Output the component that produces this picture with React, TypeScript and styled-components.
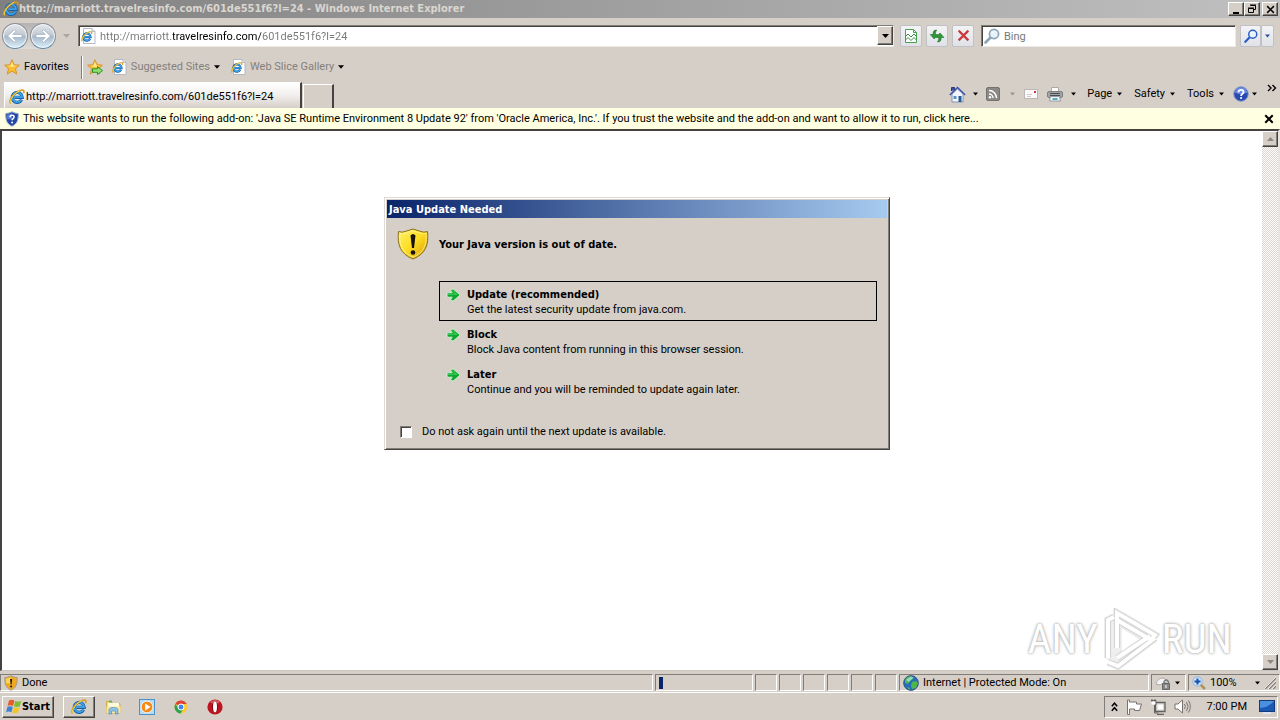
import React from "react";
import styled, { createGlobalStyle } from "styled-components";

const face = "#d6cfc8";
const shadow = "#807c77";
const dark = "#45423f";
const ui = `Roboto, "Liberation Sans", sans-serif`;
const uiBold = `"DejaVu Sans Condensed", "DejaVu Sans", sans-serif`;

const GlobalStyle = createGlobalStyle`
  * { box-sizing: border-box; }
  body { margin: 0; background: ${face}; color: #000; font-family: ${ui}; font-size: 11px; line-height: 14px; }
  button, input { font: inherit; color: inherit; margin: 0; padding: 0; border: 0; background: none; border-radius: 0; }
  svg { display: block; flex: none; }
  h1, h2, p { margin: 0; font-size: 11px; }
  h1, h2, strong { font-family: ${uiBold}; }
`;

const Screen = styled.div`
  min-height: 100vh;
  display: flex;
  flex-direction: column;
  white-space: nowrap;
`;

/* ---------- title bar ---------- */
const TitleBar = styled.header`
  display: flex;
  align-items: center;
  height: 18px;
  padding: 0 2px 0 3px;
  color: #dad6d0;
  background: linear-gradient(90deg, #808080, #c0c0c0);
`;
const WindowTitle = styled.h1`
  flex: 1;
  font-weight: bold;
`;
const Caption = styled.button<{ $gap?: boolean }>`
  display: grid;
  place-items: center;
  width: 16px;
  height: 14px;
  margin-left: ${(p) => (p.$gap ? 2 : 0)}px;
  background: ${face};
  border: 1px solid;
  border-color: #fff ${dark} ${dark} #fff;
  box-shadow: inset -1px -1px ${shadow};
`;

/* ---------- navigation ---------- */
const NavBar = styled.nav`
  display: flex;
  align-items: center;
  height: 34px;
  padding: 1px 6px 0 2px;
`;
const RoundPair = styled.div`
  display: flex;
  gap: 2px;
  border-radius: 13px;
  background: linear-gradient(#b5b3b2, #dfdbd7);
`;
const RoundButton = styled.button`
  display: grid;
  place-items: center;
  width: 26px;
  height: 26px;
  border: 1px solid #8b9098;
  border-bottom-color: #5f87a8;
  border-radius: 50%;
  background: linear-gradient(#e4e7ec, #c3c9d2 45%, #a9b8c9 52%, #d9effc);
  box-shadow: inset 0 0 1px 1px #f4f8fc;
`;
const Plain = styled.button`
  display: grid;
  place-items: center;
  height: 18px;
`;
const PageMenu = styled(Plain)`
  width: 11px;
  margin: 0 6px 0 5px;
`;
const Field = styled.div<{ $w?: number }>`
  display: flex;
  align-items: center;
  flex: ${(p) => (p.$w ? `0 1 ${p.$w}px` : "1 1 0")};
  height: 22px;
  padding-left: 2px;
  background: #fff;
  border: 1px solid;
  border-color: ${shadow} #eeeae6 #eeeae6 ${shadow};
  box-shadow: inset 1px 1px ${dark};
`;
const AddressInput = styled.input`
  flex: 1;
  min-width: 0;
  margin-left: 4px;
  padding-top: 2px;
  outline: 0;
  color: transparent;
  background: linear-gradient(90deg, #777 73px, #000 73px 161px, #777 161px);
  background-clip: text;
  -webkit-background-clip: text;
`;
const SearchInput = styled.input`
  flex: 1;
  min-width: 0;
  margin-left: 4px;
  padding-top: 2px;
  outline: 0;
  &::placeholder { color: #777; opacity: 1; }
`;
const DropButton = styled(Caption)`
  height: 19px;
`;
const ToolButton = styled.button<{ $w?: number; $ml?: number }>`
  display: grid;
  place-items: center;
  width: ${(p) => p.$w ?? 22}px;
  height: 22px;
  margin-left: ${(p) => p.$ml ?? 4}px;
  border: 1px solid #bfc1c5;
  border-radius: 2px;
  background: linear-gradient(#f3f3f5, #e0e2e8);
`;
const SearchBox = styled.div`
  display: flex;
  flex: 0 1 293px;
  margin-left: 7px;
`;

/* ---------- favorites and tabs ---------- */
const FavoritesBar = styled.div`
  display: flex;
  align-items: center;
  height: 30px;
  padding-left: 4px;
`;
const BarButton = styled.button<{ $dim?: boolean; $mr?: number }>`
  display: flex;
  align-items: center;
  gap: 4px;
  margin-right: ${(p) => p.$mr ?? 0}px;
  color: ${(p) => (p.$dim ? "#85807b" : "#000")};
`;
const Divider = styled.span`
  width: 2px;
  height: 23px;
  margin: 0 4px 0 12px;
  border-left: 1px solid ${shadow};
  border-right: 1px solid #fff;
`;
const TabRow = styled.div`
  display: flex;
  align-items: flex-end;
  height: 26px;
  padding: 0 3px 0 4px;
`;
const Tab = styled.button<{ $active?: boolean }>`
  display: flex;
  align-items: center;
  gap: 1px;
  width: ${(p) => (p.$active ? 298 : 31)}px;
  height: ${(p) => (p.$active ? 26 : 24)}px;
  padding: 2px 0 0 4px;
  margin-right: 1px;
  border: solid;
  border-width: 1px 2px 0 1px;
  border-color: #fff ${dark} #fff #fff;
  background: ${(p) => (p.$active ? `linear-gradient(#fff, #f3f1ef 45%, ${face})` : face)};
`;
const Commands = styled.div`
  display: flex;
  align-items: center;
  height: 28px;
  margin-left: auto;
`;
const Command = styled.button<{ $ml: number; $gap?: number }>`
  display: flex;
  align-items: center;
  gap: ${(p) => p.$gap ?? 5}px;
  margin-left: ${(p) => p.$ml}px;
`;
const More = styled.button`
  align-self: flex-start;
  margin: 4px 0 0 10px;
`;

/* ---------- add-on notice ---------- */
const InfoBar = styled.div`
  display: flex;
  align-items: center;
  gap: 4px;
  height: 21px;
  padding: 0 6px 0 5px;
  background: #ffffe1;
`;
const InfoLink = styled.button`
  flex: 1;
  text-align: left;
`;

/* ---------- page ---------- */
const Viewport = styled.div`
  position: relative;
  flex: 1;
  display: flex;
  background: #fff;
  border: solid;
  border-width: 2px 2px 1px;
  border-color: ${dark} #e8e4df #c9c5c0 ${dark};
`;
const Page = styled.main`
  flex: 1;
  display: flex;
  justify-content: center;
  align-items: flex-start;
  padding: 66px 0 66px 10px;
`;
const ScrollTrack = styled.div`
  display: flex;
  flex-direction: column;
  justify-content: space-between;
  width: 16px;
  background: repeating-conic-gradient(#fff 0 25%, #d9d4ce 0 50%) 0 0 / 2px 2px;
`;
const ScrollButton = styled(Caption)`
  height: 16px;
`;

const Dialog = styled.section`
  width: 506px;
  padding: 2px;
  background: ${face};
  border: 1px solid;
  border-color: #dedad5 ${dark} ${dark} #dedad5;
  box-shadow: inset 1px 1px #fff, inset -1px -1px ${shadow};
`;
const DialogTitle = styled.h2`
  height: 18px;
  padding-left: 2px;
  color: #fff;
  line-height: 19px;
  background: linear-gradient(90deg, #0a246a, #a6caf0);
`;
const Headline = styled.div`
  display: flex;
  align-items: center;
  gap: 10px;
  height: 52px;
  padding-left: 10px;
  strong { padding-top: 2px; }
`;
const Options = styled.div`
  display: flex;
  flex-direction: column;
  margin: 11px 10px 0 52px;
`;
const Option = styled.button<{ $focused?: boolean }>`
  display: flex;
  align-items: flex-start;
  gap: 6px;
  height: 40px;
  padding: 5px 6px 0;
  line-height: 15px;
  text-align: left;
  border: 1px solid ${(p) => (p.$focused ? "#000" : "transparent")};
  svg { margin-top: 1px; }
  strong, span { display: block; }
`;
const CheckLabel = styled.label`
  display: flex;
  align-items: center;
  gap: 10px;
  padding: 24px 0 8px 13px;
`;
const Check = styled.input`
  appearance: none;
  width: 12px;
  height: 12px;
  background: #fff;
  border: 1px solid;
  border-color: ${shadow} #fff #fff ${shadow};
  box-shadow: inset 1px 1px ${dark};
  &:checked { background: radial-gradient(#000 40%, #fff 45%); }
`;

const Watermark = styled.div`
  position: absolute;
  right: 46px;
  bottom: 0;
  display: flex;
  align-items: center;
  gap: 2px;
  color: #fff;
  font: 41px/62px "Roboto Condensed", "Liberation Sans Narrow", sans-serif;
  text-shadow: 0 0 2px #b4b4b4, 0 0 3px #bbb, 0 0 4px #ddd;
  pointer-events: none;
`;

/* ---------- status bar ---------- */
const StatusBar = styled.footer`
  display: flex;
  gap: 2px;
  height: 22px;
  padding: 3px 0 1px;
  border-bottom: 1px solid #fff;
`;
const Cell = styled.div<{ $w?: number }>`
  display: flex;
  align-items: center;
  gap: 4px;
  flex: ${(p) => (p.$w ? `0 0 ${p.$w}px` : "1")};
  padding: 1px 3px 0;
  border: 1px solid;
  border-color: ${shadow} #fff #fff ${shadow};
`;
const Progress = styled.span`
  width: 4px;
  height: 12px;
  background: #0a246a;
`;
const Push = styled.span`
  margin-left: auto;
`;

/* ---------- taskbar ---------- */
const TaskBar = styled.footer`
  display: flex;
  align-items: center;
  height: 27px;
  padding: 0 2px;
`;
const TaskButton = styled.button<{ $w: number; $raised?: boolean; $ml?: number }>`
  display: flex;
  align-items: center;
  justify-content: center;
  width: ${(p) => p.$w}px;
  height: 22px;
  margin-left: ${(p) => p.$ml ?? 0}px;
  border: 1px solid;
  border-color: ${(p) => (p.$raised ? `#fff ${dark} ${dark} #fff` : "transparent")};
  box-shadow: ${(p) => (p.$raised ? `inset -1px -1px ${shadow}` : "none")};
`;
const Tray = styled.div`
  display: flex;
  align-items: center;
  gap: 8px;
  height: 22px;
  margin-left: auto;
  padding: 0 2px 0 6px;
  border: 1px solid;
  border-color: ${shadow} #fff #fff ${shadow};
`;
const Clock = styled.time`
  margin: 0 4px 0 8px;
`;

/* ---------- drawings ---------- */
const Tri = ({ c = "#000", w = 7 }: { c?: string; w?: number }) => (
  <svg width={w} height="4" viewBox="0 0 7 4"><path d="M0 0h7L3.5 4z" fill={c} /></svg>
);
const IeMark = () => (
  <g fill="none">
    <path d="M12.6 10.8A5 5 0 1 1 13.2 8.4H5.4" stroke="#155fa8" strokeWidth="3.2" />
    <path d="M12.4 10.6A4.8 4.8 0 1 1 13 8.2H5.4" stroke="#3fa4e6" strokeWidth="1.7" />
    <path d="M1.6 14.4C-.8 11.2 4.800 3.600 11 1.400c3.200-1.100 4.600.2 3.600 2.800" stroke="#d79b13" strokeWidth="1.6" />
    <path d="M1.400 13.800C.4 11.400 5.200 3.900 11 1.600" stroke="#f8dc58" strokeWidth=".9" />
  </g>
);
const Ie = ({ s = 16 }: { s?: number }) => (
  <svg width={s} height={s} viewBox="0 0 16 16"><IeMark /></svg>
);
const PageIe = () => (
  <svg width="15" height="16" viewBox="0 0 15 16">
    <path d="M2.500.5h8.500l3 3v12h-11.500z" fill="#fff" stroke="#b4b9c2" />
    <path d="M11 .5v3h3" fill="#dfe6ef" stroke="#b4b9c2" />
    <g transform="translate(0 3) scale(.72)"><IeMark /></g>
  </svg>
);
const Arrow = ({ flip }: { flip?: boolean }) => (
  <svg width="18" height="16" viewBox="0 0 18 16">
    <path d={flip ? "M9.500 1.500L16.500 8l-7 6.500-1.500-1.700L11.200 9.600H2V6.400h9.200L8 3.200z" : "M8.500 1.500L1.500 8l7 6.500L10 12.800 6.800 9.600H16V6.400H6.800L10 3.200z"} fill="#fff" stroke="#9fb0c4" strokeWidth=".8" />
  </svg>
);
const star = "M8 .8l2.200 4.900 5.200.5-3.900 3.500 1.200 5.300L8 12.200 3.300 15l1.200-5.300L.6 6.200l5.200-.5z";
const Star = ({ add }: { add?: boolean }) => (
  <svg width="16" height="16" viewBox="0 0 16 16">
    <path d={star} fill="#fcbd33" stroke="#d3902a" strokeWidth=".9" />
    <path d="M8 3l1.400 3.500 3 .4L8 8 3.500 7l3-.5z" fill="#ffe98f" />
    {add && <path d="M5.500 9.800h5V7.600l5 4-5 4v-2.300h-5z" fill="#8ee070" stroke="#1c8c1c" strokeWidth=".9" />}
  </svg>
);
const Lens = ({ c, s = 16 }: { c: string; s?: number }) => (
  <svg width={s} height={s} viewBox="0 0 16 16">
    <path d="M6.500 9.500L1.500 14.500" stroke={c} strokeWidth="2.600" strokeLinecap="round" />
    <circle cx="10" cy="6" r="4.600" fill="#e6f3fb" stroke={c} strokeWidth="1.700" />
    <path d="M7.800 5.500a2.400 2.400 0 0 1 2.400-2" fill="none" stroke="#fff" />
  </svg>
);
const Compat = () => (
  <svg width="14" height="16" viewBox="0 0 14 16">
    <path d="M1.500 14.500v-13h8l3 3v10z" fill="#fff" stroke="#4aa052" />
    <path d="M9.500 1.500v3h3" fill="none" stroke="#4aa052" />
    <path d="M1.500 8.500L4 6l3 3 3-3 2.500 2.500M1.500 12L4 9.500l3 3 3-3 2.500 2.500" fill="none" stroke="#389044" />
  </svg>
);
const Refresh = () => (
  <svg width="16" height="14" viewBox="0 0 16 14">
    <path d="M7.800 1C4.700 1 4 2.400 4 5.500H1.200L5.200 10l4-4.500H6.500C6.400 3.600 6.600 2.300 7.800 1z" fill="#2c9836" stroke="#15651d" strokeWidth=".5" />
    <path d="M8.400 13c3.100 0 3.800-1.400 3.800-4.500H15L11 4 7 8.500h2.700c.1 1.900-.1 3.200-1.300 4.500z" fill="#2c9836" stroke="#15651d" strokeWidth=".5" />
  </svg>
);
const Cross = ({ c, s = 12, w = 2.4 }: { c: string; s?: number; w?: number }) => (
  <svg width={s} height={s} viewBox="0 0 12 12"><path d="M1.500 1.500l9 9M10.500 1.500l-9 9" stroke={c} strokeWidth={w} /></svg>
);
const Home = () => (
  <svg width="17" height="17" viewBox="0 0 17 17">
    <path d="M3 8v8h11V8L8.500 3z" fill="#f2f5fb" stroke="#8493b5" />
    <path d="M2.500 5V1.500h3V4" fill="#3b50a0" stroke="#26377c" />
    <path d="M.8 9L8.500 1.500 16.200 9" fill="none" stroke="#3c51a4" strokeWidth="1.400" />
    <path d="M4.500 10h3v3h-3z" fill="#5a8fc9" /><path d="M9.500 10h3v6h-3z" fill="#235b94" />
  </svg>
);
const Rss = () => (
  <svg width="14" height="14" viewBox="0 0 14 14">
    <rect x=".5" y=".5" width="13" height="13" rx="1.500" fill="#8b8885" stroke="#75726f" />
    <g fill="none" stroke="#fff" strokeWidth="1.500"><path d="M3 7a4 4 0 0 1 4 4M3 3.500a7.500 7.500 0 0 1 7.500 7.500" /></g>
    <circle cx="4" cy="10.200" r="1.200" fill="#fff" />
  </svg>
);
const Mail = () => (
  <svg width="14" height="10" viewBox="0 0 14 10">
    <rect x=".5" y=".5" width="13" height="9" fill="#fbf9f8" stroke="#bbb7b8" />
    <path d="M10 2h2v2h-2z" fill="#c7364c" /><path d="M3 5.500h5M3 7.500h4" stroke="#ceccd2" />
  </svg>
);
const Printer = () => (
  <svg width="16" height="16" viewBox="0 0 16 16">
    <path d="M4.500 6V1.500h7V6" fill="#fff" stroke="#aaa" />
    <rect x=".5" y="5.500" width="15" height="6" rx="1.500" fill="#a2a4a7" stroke="#7b7d80" />
    <path d="M3 7.500h10M3 9.500h10" stroke="#4a4d50" strokeWidth="1.200" />
    <path d="M3.500 10.500h9l1 4.500h-11z" fill="#f5f8fa" stroke="#979ca0" /><path d="M5.500 12h5v2h-5z" fill="#5aaac4" />
  </svg>
);
const Help = () => (
  <svg width="16" height="16" viewBox="0 0 16 16">
    <circle cx="8" cy="8" r="7.300" fill="#2849b0" stroke="#8f9fc9" />
    <path d="M1.800 6.500a6.300 6.300 0 0 1 12.400 0Q8 10 1.800 6.500z" fill="#6b8ae0" />
    <path d="M5.500 6.300C5.500 3 10.600 3 10.500 6c0 1.900-2.400 1.800-2.400 4" fill="none" stroke="#fff" strokeWidth="1.800" /><circle cx="8.100" cy="12" r="1.100" fill="#fff" />
  </svg>
);
const HelpShield = () => (
  <svg width="14" height="16" viewBox="0 0 14 16">
    <path d="M.8 2.500Q4 2.500 7 .8q3 1.700 6.200 1.700C13.500 9 12 13 7 15.200 2 13 .5 9 .8 2.500z" fill="#2448a8" stroke="#9aa9ca" />
    <path d="M2 3.700q3-.3 5-1.500v6H2.200z" fill="#577ed6" />
    <path d="M5 6.200c0-2.600 4.200-2.500 4.100-.2 0 1.600-2 1.600-2 3.300" fill="none" stroke="#fff" strokeWidth="1.500" /><circle cx="7.100" cy="11.500" r="1" fill="#fff" />
  </svg>
);
const Shield = () => (
  <svg width="32" height="32" viewBox="0 0 32 32">
    <defs><linearGradient id="gold" x2="1" y2="1"><stop stopColor="#fff36b" /><stop offset=".5" stopColor="#fddc22" /><stop offset="1" stopColor="#d59a08" /></linearGradient></defs>
    <path d="M1.500 3.500Q5 5 9 3.200L16 1l7 2.200q4 1.800 7.500.3C32 17 28.500 26 16 31 3.500 26 0 17 1.500 3.500z" fill="url(#gold)" stroke="#8a6f1c" strokeWidth="1" />
    <path d="M3 5.500q3.500 1 7-.8L16 2.800l6 1.900q3.500 1.800 7 .8C30 17 26.500 24.800 16 29.200 5.500 24.800 2 17 3 5.500z" fill="none" stroke="#fff6a6" strokeWidth=".7" />
    <path d="M13.500 7.500q2.500-3 5 0L17 20h-2z" fill="#17130a" /><circle cx="16" cy="24.500" r="2.300" fill="#17130a" />
  </svg>
);
const StatusShield = () => (
  <svg width="14" height="16" viewBox="0 0 14 16">
    <path d="M.8 2.500Q4 2.500 7 .8q3 1.700 6.200 1.700C13.500 9 12 13 7 15.200 2 13 .5 9 .8 2.500z" fill="#f0a81e" stroke="#a39c94" />
    <path d="M2 3.700q3-.3 5-1.500v6H2.200z" fill="#fbd65c" />
    <path d="M6 4h2.200l-.6 5.500h-1z" fill="#2a1c0a" /><circle cx="7.100" cy="11.500" r="1.100" fill="#2a1c0a" />
  </svg>
);
const Go = () => (
  <svg width="15" height="14" viewBox="0 0 15 14">
    <path d="M1 4.800h5.200L4.500 2.500 7 .8 14.200 7 7 13.200l-2.500-1.700 1.700-2.300H1z" fill="#0fa62f" stroke="#d2f0d0" strokeWidth="1" />
    <path d="M2 5.800h6.500L6.200 2.900 7 2.300 12 7H2z" fill="#2fc94c" />
  </svg>
);
const Globe = () => (
  <svg width="16" height="16" viewBox="0 0 16 16">
    <circle cx="8" cy="8" r="7.400" fill="#286cbc" stroke="#1c3d76" strokeWidth=".7" />
    <path d="M2 5q2-4 7-4l1 3-3 2-2 3-3-1zM9 7l4-1 2 2-2 5-4 1-1-3zM4 12l3 1-1 2z" fill="#4db848" />
    <path d="M3 5q3-4 8-2.500Q8 4 6 7z" fill="#b9e5f5" opacity=".7" />
  </svg>
);
const Lock = () => (
  <svg width="16" height="14" viewBox="0 0 16 14">
    <path d="M1 8C2 4 5 2 8 2l5 3-4 2-4 2z" fill="#f3f3f3" stroke="#aaa" />
    <path d="M9 8V5.500q2.500-3 4.500 0V8" fill="none" stroke="#777" strokeWidth="1.300" /><path d="M7.500 7.500h7v6h-7z" fill="#898989" stroke="#666" /><path d="M11 9v3" stroke="#fff" />
  </svg>
);
const ZoomIn = () => (
  <svg width="14" height="14" viewBox="0 0 14 14">
    <path d="M8.500 8.500l4.500 4.500" stroke="#b19257" strokeWidth="2.500" /><circle cx="5.500" cy="5.500" r="4.700" fill="#cae4fa" stroke="#8fb3d6" />
    <path d="M5.500 2.500v6M2.500 5.500h6" stroke="#174fb0" strokeWidth="2" />
  </svg>
);
const Grip = () => (
  <svg width="12" height="12" viewBox="0 0 12 12"><path d="M1 12L12 1M5 12l7-7M9 12l3-3" stroke="#807c77" strokeWidth="1.500" /><path d="M0 12L12 0M4 12l8-8M8 12l4-4" stroke="#fff" strokeWidth=".7" /></svg>
);
const WinFlag = () => (
  <svg width="16" height="15" viewBox="0 0 16 15">
    <path d="M3 1.500Q6 0 8.400 1.600L7 7Q4.500 5.500 1.600 6.800z" fill="#e65c28" /><path d="M9.200 2Q12 3.200 15.200 2L13.800 7.200Q11 8.600 7.900 7.200z" fill="#7fbd36" />
    <path d="M1.400 7.700Q4.300 6.500 6.800 8L5.400 13.300Q3 12 .1 13.200z" fill="#3d83d3" /><path d="M7.700 8.300Q10.600 9.600 13.500 8.200L12.100 13.500Q9 15 6.200 13.600z" fill="#f5c526" />
  </svg>
);
const Folder = () => (
  <svg width="17" height="16" viewBox="0 0 17 16">
    <path d="M1.500 14V2.500h5l1 2H15V14z" fill="#f4d879" stroke="#d0ad4e" /><path d="M3 4h11v4H3z" fill="#fffad7" /><path d="M4 1.500h3v2H4z" fill="#61b767" />
    <path d="M1.500 7.500h14V14h-14z" fill="#f9e7a0" /><path d="M4 15v-4q0-2.500 4.500-2.500T13 11v4h-2.500v-3h-4v3z" fill="#8bc4ea" stroke="#4b8ec1" strokeWidth=".7" />
  </svg>
);
const Player = () => (
  <svg width="16" height="16" viewBox="0 0 16 16">
    <rect x=".5" y=".5" width="15" height="15" fill="#b9dcf5" stroke="#4c91c9" /><circle cx="8" cy="8" r="5.800" fill="#f58b1d" stroke="#fff" strokeWidth=".7" /><path d="M6.200 4.600L11.500 8l-5.300 3.400z" fill="#fff" />
  </svg>
);
const Chrome = () => (
  <svg width="14" height="14" viewBox="0 0 14 14">
    <circle cx="7" cy="7" r="6.500" fill="#f8cb32" /><path d="M7 7L1.400 3.700A6.500 6.500 0 0 1 12.700 4H7z" fill="#de4436" />
    <path d="M1.400 3.700A6.500 6.500 0 0 0 6.600 13.500L9.500 8.500 7 7 4.400 8.500z" fill="#2da351" /><circle cx="7" cy="7" r="3" fill="#4486ef" stroke="#fff" />
  </svg>
);
const Opera = () => (
  <svg width="16" height="16" viewBox="0 0 16 16"><circle cx="8" cy="8" r="7.600" fill="#bd1420" /><path d="M3 3a7 7 0 0 1 10 0L8 6z" fill="#dc5b60" /><ellipse cx="8" cy="8" rx="2.900" ry="5.800" fill="#7d0810" /><ellipse cx="8" cy="8" rx="2" ry="5.400" fill="#fff" /></svg>
);
const Chevrons = () => (
  <svg width="7" height="10" viewBox="0 0 7 10"><path d="M.8 4.200l2.700-3 2.700 3M.8 8.700l2.700-3 2.700 3" fill="none" stroke="#000" strokeWidth="1.500" /></svg>
);
const Flag = () => (
  <svg width="16" height="16" viewBox="0 0 16 16"><path d="M1.500 1v14.500h2V10h5v1.500h5L15.500 5h-5V3h-7V1z" fill="#fff" stroke="#77736e" /></svg>
);
const Network = () => (
  <svg width="16" height="16" viewBox="0 0 16 16"><path d="M5.500 3.500h9.500v9H5.500zM7 15.500h7" fill="#d8d4cf" stroke="#64605c" strokeWidth="1.300" /><path d="M7.500 5.500h5.500v5H7.500z" fill="#fff" /><path d="M1 1.500h5v4.500H4.500v8h4M2 0v3M5 0v3" fill="none" stroke="#64605c" /><path d="M1.500 2.500h4v3h-4z" fill="#fff" /></svg>
);
const Speaker = () => (
  <svg width="17" height="15" viewBox="0 0 17 15"><path d="M1 5h3l4.500-4v13L4 10H1z" fill="#fff" stroke="#77736e" /><path d="M10.500 5q1.700 2.500 0 5M12.500 3q3 4.500 0 9M14.500 1.500q3.700 6 0 12" fill="none" stroke="#77736e" /></svg>
);
const Desktop = () => (
  <svg width="16" height="14" viewBox="0 0 16 14"><rect x=".5" y=".5" width="15" height="11" fill="#1c58b5" stroke="#153a78" /><path d="M1 1h14Q9 8 1 8z" fill="#4b90df" /><path d="M4 13h8" stroke="#dce4ef" strokeWidth="2" /></svg>
);
const logoStrokes: [string, number][] = [["#ededed", 8], ["#d3d3d3", 6], ["#fff", 4]];
const PlayLogo = () => (
  <svg width="60" height="62" viewBox="0 0 60 62">
    <path d="M8 14l9-10 38 23-37 28-12-4z" fill="#efefef" />
    {logoStrokes.map(([c, w]) => (
      <g key={c} fill="none" stroke={c} strokeWidth={w}>
        <path d="M8 50V12l6-3M17 40V5l38 22-4 5-34-20M8 54l10 4 37-28M17 50l33-22" />
      </g>
    ))}
    <path d="M21 19v25l19-13z" fill="#fff" stroke="#e2e2e2" />
  </svg>
);

const options = [
  ["Update (recommended)", "Get the latest security update from java.com."],
  ["Block", "Block Java content from running in this browser session."],
  ["Later", "Continue and you will be reminded to update again later."],
];

export default function App() {
  return (
    <Screen>
      <GlobalStyle />
      <TitleBar>
        <Ie />
        <WindowTitle>http://marriott.travelresinfo.com/601de551f6?l=24 - Windows Internet Explorer</WindowTitle>
        <Caption aria-label="Minimize"><svg width="10" height="9" viewBox="0 0 10 9"><path d="M2 7h6v2H2z" /></svg></Caption>
        <Caption aria-label="Restore"><svg width="10" height="10" viewBox="0 0 10 10"><path d="M3.500 1.500h5v4h-2M3 1h6M1.500 4.500h5v4h-5zM1 4h6" fill="none" stroke="#000" /></svg></Caption>
        <Caption aria-label="Close" $gap><Cross c="#000" s={9} w={2} /></Caption>
      </TitleBar>

      <NavBar>
        <RoundPair>
          <RoundButton aria-label="Back"><Arrow /></RoundButton>
          <RoundButton aria-label="Forward"><Arrow flip /></RoundButton>
        </RoundPair>
        <PageMenu aria-label="Recent pages"><Tri c="#aaa59f" /></PageMenu>
        <Field>
          <PageIe />
          <AddressInput aria-label="Address" defaultValue="http://marriott.travelresinfo.com/601de551f6?l=24" />
          <DropButton aria-label="Show addresses"><Tri /></DropButton>
        </Field>
        <ToolButton aria-label="Compatibility view" $ml={6}><Compat /></ToolButton>
        <ToolButton aria-label="Refresh"><Refresh /></ToolButton>
        <ToolButton aria-label="Stop"><Cross c="#c93b3f" s={13} w={2} /></ToolButton>
        <SearchBox>
          <Field>
            <Lens c="#8ca5b6" />
            <SearchInput aria-label="Search" placeholder="Bing" />
          </Field>
          <ToolButton aria-label="Search now" $w={21}><Lens c="#2b5fc4" s={14} /></ToolButton>
          <ToolButton aria-label="Search options" $w={13} $ml={0}><Tri c="#2b4f9b" w={5} /></ToolButton>
        </SearchBox>
      </NavBar>

      <FavoritesBar>
        <BarButton><Star />Favorites</BarButton>
        <Divider />
        <BarButton aria-label="Add to favorites" $mr={9}><Star add /></BarButton>
        <BarButton $dim $mr={11}><PageIe />Suggested Sites <Tri w={6} /></BarButton>
        <BarButton $dim><PageIe />Web Slice Gallery <Tri w={6} /></BarButton>
      </FavoritesBar>

      <TabRow>
        <Tab $active><Ie />http://marriott.travelresinfo.com/601de551f6?l=24</Tab>
        <Tab aria-label="New tab" />
        <Commands>
          <Command aria-label="Home" $ml={0} $gap={7}><Home /><Tri w={5} /></Command>
          <Command aria-label="Feeds" $ml={8} $gap={10}><Rss /><Tri c="#98938d" w={5} /></Command>
          <Command aria-label="Mail" $ml={9}><Mail /></Command>
          <Command aria-label="Print" $ml={9} $gap={8}><Printer /><Tri w={5} /></Command>
          <Command $ml={11}>Page<Tri w={5} /></Command>
          <Command $ml={12}>Safety<Tri w={5} /></Command>
          <Command $ml={12}>Tools<Tri w={5} /></Command>
          <Command aria-label="Help" $ml={9} $gap={3}><Help /><Tri w={5} /></Command>
          <More aria-label="More commands"><svg width="10" height="8" viewBox="0 0 10 8"><path d="M1 1l3 3-3 3M5.500 1l3 3-3 3" fill="none" stroke="#000" strokeWidth="1.400" /></svg></More>
        </Commands>
      </TabRow>

      <InfoBar>
        <HelpShield />
        <InfoLink>This website wants to run the following add-on: 'Java SE Runtime Environment 8 Update 92' from 'Oracle America, Inc.'. If you trust the website and the add-on and want to allow it to run, click here...</InfoLink>
        <Plain aria-label="Dismiss"><Cross c="#000" s={10} w={2.4} /></Plain>
      </InfoBar>

      <Viewport>
        <Page>
          <Dialog aria-label="Java Update Needed">
            <DialogTitle>Java Update Needed</DialogTitle>
            <Headline><Shield /><strong>Your Java version is out of date.</strong></Headline>
            <Options>
              {options.map(([title, text], i) => (
                <Option key={title} $focused={i === 0}>
                  <Go />
                  <div><strong>{title}</strong><span>{text}</span></div>
                </Option>
              ))}
            </Options>
            <CheckLabel><Check type="checkbox" />Do not ask again until the next update is available.</CheckLabel>
          </Dialog>
        </Page>
        <ScrollTrack>
          <ScrollButton aria-label="Scroll up"><svg width="7" height="4" viewBox="0 0 7 4"><path d="M3.500 0L7 4H0z" fill="#8b8782" /></svg></ScrollButton>
          <ScrollButton aria-label="Scroll down"><Tri c="#8b8782" /></ScrollButton>
        </ScrollTrack>
        <Watermark><span>ANY</span><PlayLogo /><span>RUN</span></Watermark>
      </Viewport>

      <StatusBar>
        <Cell><StatusShield />Done</Cell>
        <Cell $w={98}><Progress /></Cell>
        {[0, 1, 2, 3, 4, 5].map((n) => <Cell key={n} $w={22} />)}
        <Cell $w={250}><Globe />Internet | Protected Mode: On</Cell>
        <Cell $w={35}><Lock /><Tri w={5} /></Cell>
        <Cell $w={92}><ZoomIn />100%<Push><Tri w={5} /></Push><Grip /></Cell>
      </StatusBar>

      <TaskBar>
        <TaskButton $w={52} $raised><WinFlag /><strong>Start</strong></TaskButton>
        <TaskButton $w={32} $ml={9} $raised aria-label="Internet Explorer"><Ie /></TaskButton>
        <TaskButton $w={34} $ml={1} aria-label="Explorer"><Folder /></TaskButton>
        <TaskButton $w={34} aria-label="Media Player"><Player /></TaskButton>
        <TaskButton $w={34} aria-label="Chrome"><Chrome /></TaskButton>
        <TaskButton $w={34} aria-label="Opera"><Opera /></TaskButton>
        <Tray>
          <Chevrons /><Flag /><Network /><Speaker />
          <Clock>7:00 PM</Clock>
          <Desktop />
        </Tray>
      </TaskBar>
    </Screen>
  );
}
